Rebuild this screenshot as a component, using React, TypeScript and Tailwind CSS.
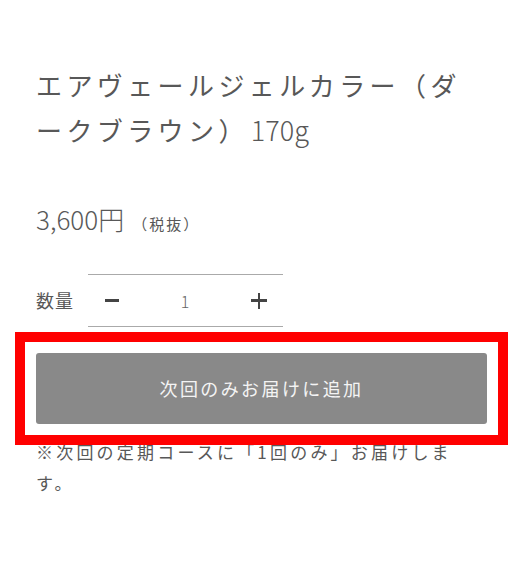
import { useState } from "react";

export default function App() {
  const [qty, setQty] = useState(1);

  return (
    <div className="min-h-screen bg-white px-9 pt-[62px] font-['Noto_Sans_CJK_JP',sans-serif] text-[#585858]">
      {/* Title */}
      <h1 className="text-[26px] leading-[45px] tracking-[4.4px] font-normal">
        エアヴェールジェルカラー（ダ
        <br />
        ークブラウン）
        <span className="ml-[2px] text-[27px] tracking-normal font-light">170g</span>
      </h1>

      {/* Price */}
      <div className="mt-[47px] flex items-baseline">
        <span className="text-[26px] leading-[40px] font-light">3,600円</span>
        <span className="ml-2 text-[15px] tracking-[2px]">（税抜）</span>
      </div>

      {/* Quantity */}
      <div className="mt-[35px] flex items-center">
        <span className="w-[52px] text-[18px] tracking-[1px]">数量</span>
        <div className="flex h-[53px] w-[195px] items-center justify-between border-y border-[#aaa] pl-[17px] pr-[16px]">
          <button
            onClick={() => setQty(Math.max(1, qty - 1))}
            className="flex h-6 w-[14px] items-center"
          >
            <span className="block h-[2.5px] w-[14px] bg-[#444]" />
          </button>
          <span className="text-[16px] font-light text-[#666]">{qty}</span>
          <button
            onClick={() => setQty(qty + 1)}
            className="relative flex h-[16px] w-[16px] items-center justify-center"
          >
            <span className="absolute h-[2.5px] w-[16px] bg-[#444]" />
            <span className="absolute h-[16px] w-[2.5px] bg-[#444]" />
          </button>
        </div>
      </div>

      {/* Add button, with the highlight frame around it */}
      <div className="mt-[26px] outline-[10px] outline-offset-[11px] outline-[#ff0000] outline-solid">
        <button className="flex h-[71px] w-full items-center justify-center rounded-[3px] bg-[#898989] text-[18px] tracking-[2.4px] text-[#f4f4f4]">
          次回のみお届けに追加
        </button>
      </div>

      {/* Note */}
      <p className="mt-[12px] text-[17px] leading-[31px] tracking-[3.2px]">
        ※次回の定期コースに「1回のみ」お届けします。
      </p>
    </div>
  );
}
